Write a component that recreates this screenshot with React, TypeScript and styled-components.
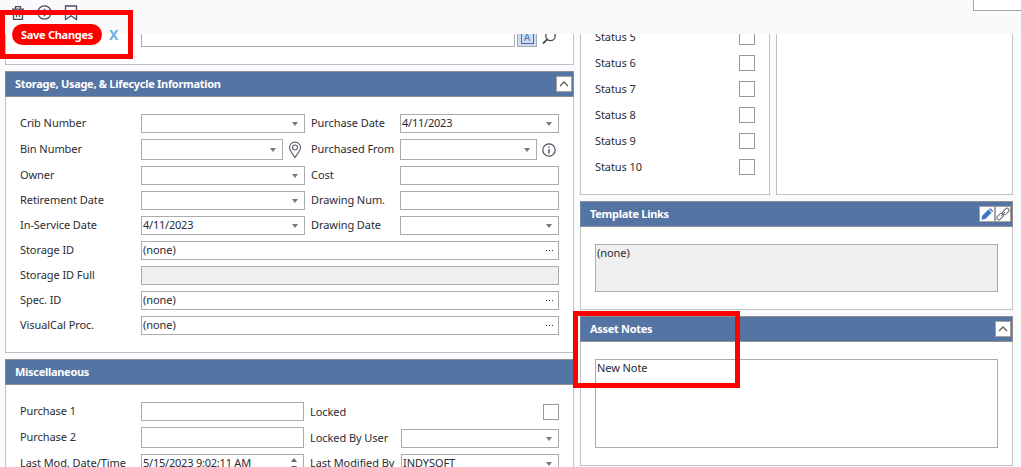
import { ReactNode } from 'react'
import styled, { createGlobalStyle } from 'styled-components'

const GlobalStyle = createGlobalStyle`
    * {
        box-sizing: border-box;
    }

    body {
        margin: 0;
        background: #fafbfd;
        color: #2b2b33;
        font-family: "Noto Sans", "Open Sans", sans-serif;
        font-size: 11px;
        letter-spacing: -0.07px;
    }
`

const Screen = styled.div`
    position: relative;
    width: 1021px;
    height: 467px;
    overflow: hidden;
    display: flex;
    flex-direction: column;
`

const Toolbar = styled.div`
    flex: none;
    height: 34px;
    padding: 5px 0 0 11px;
    display: flex;
    gap: 12px;
    background: #f8fafc;

    svg {
        flex: none;
    }
`

const SearchBox = styled.div`
    flex: none;
    width: 60px;
    height: 16px;
    margin: -10px -12px 0 auto;
    border: 1px solid #a3a5a8;
    background: #fff;
`

const Viewport = styled.div`
    flex: 1;
    min-height: 0;
    overflow: hidden;
`

const Columns = styled.div`
    margin-top: -10px;
    padding-left: 5px;
    display: flex;
    align-items: flex-start;
    gap: 6px;
`

const Column = styled.div<{ $width: number }>`
    flex: none;
    width: ${(props) => props.$width}px;
    display: flex;
    flex-direction: column;
    gap: 6px;
`

const Split = styled.div`
    display: flex;
    gap: 6px;
`

const Panel = styled.section<{ $height: number; $width?: number }>`
    flex: none;
    width: ${(props) => (props.$width ? `${props.$width}px` : '100%')};
    height: ${(props) => props.$height}px;
    border: 1px solid #bfc2c6;
    background: #fff;
`

const PanelHeader = styled.header`
    height: 26px;
    margin: -1px -1px 0;
    padding: 0 1px 0 9px;
    border: 1px solid #8f8f94;
    border-left-color: #6f86ab;
    display: flex;
    align-items: center;
    justify-content: space-between;
    background: #5474a3;
    color: #fff;
`

const PanelTitle = styled.span`
    padding-bottom: 2px;
    font-weight: 700;
    letter-spacing: -0.29px;
`

const HeaderButtons = styled.div`
    display: flex;
`

const HeaderButton = styled.div`
    width: 16px;
    height: 16px;
    border: 1px solid #a6a39d;
    background: #fff;
    display: flex;
    align-items: center;
    justify-content: center;
`

const SearchRow = styled.div`
    height: 22px;
    padding-left: 135px;
    display: flex;
    align-items: flex-end;

    svg {
        margin-left: 5px;
    }
`

const LetterButton = styled.div`
    width: 20px;
    height: 22px;
    margin-left: 2px;
    border: 1px solid #a5abb5;
    background: #cfdcf0;
    display: flex;
    align-items: center;
    justify-content: center;
`

const Letter = styled.span`
    width: 13px;
    height: 14px;
    margin-top: 2px;
    border: 1px solid #4a6ea8;
    color: #4a78c0;
    font-size: 10px;
    line-height: 12px;
    text-align: center;
    letter-spacing: 0;
`

const Form = styled.div<{ $top: number }>`
    padding: ${(props) => props.$top}px 14px 0;
    display: flex;
    flex-direction: column;
    gap: 6px;
`

const FormSplit = styled.div`
    display: flex;
`

const FormColumn = styled.div<{ $width?: number; $left?: number; $top?: number }>`
    width: ${(props) => (props.$width ? `${props.$width}px` : 'auto')};
    padding: ${(props) => props.$top || 0}px 0 0 ${(props) => props.$left || 0}px;
    display: flex;
    flex-direction: column;
    gap: 6px;
`

const Row = styled.div<{ $height?: number; $gap?: number }>`
    height: ${(props) => props.$height || 19}px;
    margin-bottom: ${(props) => props.$gap || 0}px;
    display: flex;
    align-items: center;

    > svg {
        flex: none;
        margin-left: 5px;
    }
`

const Label = styled.label<{ $width: number }>`
    flex: none;
    width: ${(props) => props.$width}px;
    padding-bottom: 2px;
    white-space: nowrap;
    line-height: 15px;
`

const Input = styled.div<{ $width: number; $disabled?: boolean }>`
    flex: none;
    width: ${(props) => props.$width}px;
    height: 100%;
    padding: 0 6px 0 1px;
    border: 1px solid #a9abad;
    background: ${(props) => (props.$disabled ? '#efefef' : '#fff')};
    display: flex;
    align-items: center;
    justify-content: space-between;
    line-height: 15px;
    white-space: nowrap;
`

const Value = styled.span<{ $tight: boolean }>`
    padding-bottom: 2px;
    letter-spacing: ${(props) => (props.$tight ? -0.22 : -0.07)}px;
`

const Caret = styled.i`
    margin-left: auto;
    border: 3px solid transparent;
    border-top: 4px solid #77777c;
    border-bottom: 0;
`

const Spinner = styled.i`
    margin-left: auto;
    display: flex;
    flex-direction: column;
    gap: 4px;

    &::before,
    &::after {
        content: '';
        border: 3px solid transparent;
    }

    &::before {
        border-bottom: 4px solid #66666c;
        border-top: 0;
    }

    &::after {
        border-top: 4px solid #66666c;
        border-bottom: 0;
    }
`

const Dots = styled.i`
    width: 7px;
    height: 1px;
    margin: 0 -1px 0 auto;
    background: repeating-linear-gradient(90deg, #2b2b33 0 1px, transparent 1px 3px);
`

const Checkbox = styled.span`
    flex: none;
    width: 16px;
    height: 16px;
    margin-left: auto;
    border: 1px solid #97999c;
    background: #fff;
`

const StatusList = styled.div`
    padding: 4px 14px 0;
    display: flex;
    flex-direction: column;
    gap: 10px;
`

const TextArea = styled.div<{ $height: number; $disabled?: boolean }>`
    height: ${(props) => props.$height}px;
    margin: 17px 14px 0;
    padding: 0 1px;
    border: 1px solid #a9abad;
    background: ${(props) => (props.$disabled ? '#efefef' : '#fff')};
    line-height: 15px;
`

const Highlight = styled.div<{ $x: number; $y: number; $width: number; $height: number }>`
    position: absolute;
    left: ${(props) => props.$x}px;
    top: ${(props) => props.$y}px;
    width: ${(props) => props.$width}px;
    height: ${(props) => props.$height}px;
    border: 5px solid #fe0000;
`

const SaveBar = styled.div`
    position: absolute;
    left: 6px;
    top: 24px;
    width: 123px;
    height: 30px;
    padding-left: 6px;
    display: flex;
    align-items: flex-start;
    background: linear-gradient(#f8fafc 10px, #fff 10px);
`

const SaveButton = styled.div`
    width: 90px;
    height: 21px;
    border-radius: 11px;
    background: #fe0000;
    color: #fff;
    font-weight: 700;
    letter-spacing: -0.28px;
    line-height: 21px;
    text-align: center;
    white-space: nowrap;
`

const CancelButton = styled.div`
    margin-left: 7px;
    color: #6db3ea;
    font-size: 14px;
    font-weight: 700;
    letter-spacing: 0;
    line-height: 21px;
`

const ChevronUp = () => (
    <svg width="10" height="6" viewBox="0 0 10 6" fill="none" stroke="#66605c" strokeWidth="1.4">
        <path d="M1 5 5 1l4 4" />
    </svg>
)

const Trash = () => (
    <svg width="14" height="16" viewBox="0 0 14 16" fill="none" stroke="#4a4d5c" strokeWidth="1.3">
        <path d="M1 4.2h12M4.5 4V1.700h5V4M2.500 4.500v9.800h9V4.500M5.500 6.500v5.500M8.500 6.500v5.500" />
    </svg>
)

const Info = ({ size }: { size: number }) => (
    <svg width={size} height={size} viewBox="0 0 14 14" fill="none" stroke="#4a4d5c" strokeWidth="1.2">
        <circle cx="7" cy="7" r="6.200" />
        <path d="M7 6.200v4.300M7 3.400v1.400" strokeWidth="1.5" />
    </svg>
)

const Bookmark = () => (
    <svg width="14" height="16" viewBox="0 0 14 16" fill="none" stroke="#4a4d5c" strokeWidth="1.3">
        <path d="M1.500 1h11v13.600L7 10.800l-5.500 3.800z" />
    </svg>
)

const Magnifier = () => (
    <svg width="15" height="20" viewBox="0 0 15 20" fill="none" stroke="#4a4a55" strokeWidth="1.3">
        <circle cx="8.500" cy="9" r="4.700" />
        <path d="M5.300 12.400 1 16.500" strokeWidth="1.8" />
    </svg>
)

const Pin = () => (
    <svg width="14" height="18" viewBox="0 0 14 18" fill="none" stroke="#5c5c6a" strokeWidth="1.1">
        <path d="M7 16.600C5 13 1.500 10 1.500 6.600a5.500 5.500 0 0 1 11 0C12.500 10 9 13 7 16.600z" />
        <circle cx="7" cy="6.500" r="2.500" />
    </svg>
)

const Pencil = () => (
    <svg width="14" height="14" viewBox="0 0 14 14" fill="#3f74c4">
        <path d="M1.500 12.700 2.200 8.800 8.400 2.600l3.200 3.200L5.400 12zM9.100 1.900l1-1 3.200 3.200-1 1z" />
    </svg>
)

const Chain = () => (
    <svg width="14" height="14" viewBox="0 0 14 14" fill="none" stroke="#66666e" strokeWidth="1">
        <rect x="6.200" y="2.400" width="7.400" height="4" rx="2" transform="rotate(-45 9.900 4.400)" />
        <rect x="0.400" y="7.600" width="7.400" height="4" rx="2" transform="rotate(-45 4.100 9.600)" />
        <path d="M5 9l4-4" />
    </svg>
)

interface FieldProps {
    label: string
    labelWidth?: number
    width: number
    height?: number
    value?: string
    disabled?: boolean
    end?: ReactNode
    icon?: ReactNode
}

const Field = ({ label, labelWidth = 121, width, height, value, disabled, end, icon }: FieldProps) => (
    <Row $height={height}>
        <Label $width={labelWidth}>{label}</Label>
        <Input $width={width} $disabled={disabled}>
            {value && <Value $tight={/\d/.test(value)}>{value}</Value>}
            {end}
        </Input>
        {icon}
    </Row>
)

const statuses = ['Status 5', 'Status 6', 'Status 7', 'Status 8', 'Status 9', 'Status 10']

const App = () => {
    return (
        <Screen>
            <GlobalStyle />
            <Toolbar>
                <Trash />
                <Info size={15} />
                <Bookmark />
                <SearchBox />
            </Toolbar>
            <Viewport>
                <Columns>
                    <Column $width={569}>
                        <Panel $height={41}>
                            <SearchRow>
                                <Input $width={374} />
                                <LetterButton>
                                    <Letter>A</Letter>
                                </LetterButton>
                                <Magnifier />
                            </SearchRow>
                        </Panel>
                        <Panel $height={282}>
                            <PanelHeader>
                                <PanelTitle>Storage, Usage, &amp; Lifecycle Information</PanelTitle>
                                <HeaderButton><ChevronUp /></HeaderButton>
                            </PanelHeader>
                            <Form $top={17}>
                                <FormSplit>
                                    <FormColumn $width={285}>
                                        <Field label="Crib Number" width={164} end={<Caret />} />
                                        <Field label="Bin Number" width={142} height={21} end={<Caret />} icon={<Pin />} />
                                        <Field label="Owner" width={164} end={<Caret />} />
                                        <Field label="Retirement Date" width={164} end={<Caret />} />
                                        <Field label="In-Service Date" width={164} value="4/11/2023" end={<Caret />} />
                                    </FormColumn>
                                    <FormColumn $left={6}>
                                        <Field label="Purchase Date" labelWidth={89} width={159} value="4/11/2023" end={<Caret />} />
                                        <Field label="Purchased From" labelWidth={89} width={137} height={21} end={<Caret />} icon={<Info size={14} />} />
                                        <Field label="Cost" labelWidth={89} width={159} />
                                        <Field label="Drawing Num." labelWidth={89} width={159} />
                                        <Field label="Drawing Date" labelWidth={89} width={159} end={<Caret />} />
                                    </FormColumn>
                                </FormSplit>
                                <Field label="Storage ID" width={418} value="(none)" end={<Dots />} />
                                <Field label="Storage ID Full" width={418} disabled />
                                <Field label="Spec. ID" width={418} value="(none)" end={<Dots />} />
                                <Field label="VisualCal Proc." width={418} value="(none)" end={<Dots />} />
                            </Form>
                        </Panel>
                        <Panel $height={160}>
                            <PanelHeader>
                                <PanelTitle>Miscellaneous</PanelTitle>
                            </PanelHeader>
                            <Form $top={17}>
                                <FormSplit>
                                    <FormColumn $width={284}>
                                        <Field label="Purchase 1" width={163} />
                                        <Field label="Purchase 2" width={163} height={21} />
                                        <Field label="Last Mod. Date/Time" width={163} value="5/15/2023 9:02:11 AM" end={<Spinner />} />
                                    </FormColumn>
                                    <FormColumn $left={6} $top={2}>
                                        <Row $height={16} $gap={3}>
                                            <Label $width={91}>Locked</Label>
                                            <Checkbox />
                                        </Row>
                                        <Field label="Locked By User" labelWidth={91} width={158} end={<Caret />} />
                                        <Field label="Last Modified By" labelWidth={91} width={158} value="INDYSOFT" end={<Caret />} />
                                    </FormColumn>
                                </FormSplit>
                            </Form>
                        </Panel>
                    </Column>
                    <Column $width={433}>
                        <Split>
                            <Panel $width={190} $height={171}>
                                <StatusList>
                                    {statuses.map((status) => (
                                        <Row key={status} $height={16}>
                                            <Label $width={91}>{status}</Label>
                                            <Checkbox />
                                        </Row>
                                    ))}
                                </StatusList>
                            </Panel>
                            <Panel $width={237} $height={171} />
                        </Split>
                        <Panel $height={109}>
                            <PanelHeader>
                                <PanelTitle>Template Links</PanelTitle>
                                <HeaderButtons>
                                    <HeaderButton><Pencil /></HeaderButton>
                                    <HeaderButton><Chain /></HeaderButton>
                                </HeaderButtons>
                            </PanelHeader>
                            <TextArea $height={48} $disabled>(none)</TextArea>
                        </Panel>
                        <Panel $height={150}>
                            <PanelHeader>
                                <PanelTitle>Asset Notes</PanelTitle>
                                <HeaderButton><ChevronUp /></HeaderButton>
                            </PanelHeader>
                            <TextArea $height={89}>New Note</TextArea>
                        </Panel>
                    </Column>
                </Columns>
            </Viewport>
            <SaveBar>
                <SaveButton>Save Changes</SaveButton>
                <CancelButton>X</CancelButton>
            </SaveBar>
            <Highlight $x={0} $y={10} $width={133} $height={49} />
            <Highlight $x={573} $y={311} $width={167} $height={77} />
        </Screen>
    )
}

export default App
